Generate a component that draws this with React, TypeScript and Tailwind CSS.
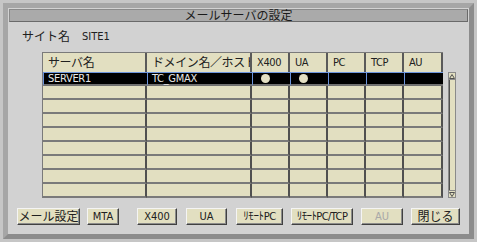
import React from 'react'

const cols = [
  { key: 'server', label: 'サーバ名', w: 'w-[104px]' },
  { key: 'domain', label: 'ドメイン名／ホスト', w: 'w-[105px]' },
  { key: 'x400', label: 'X400', w: 'w-[38px]' },
  { key: 'ua', label: 'UA', w: 'w-[38px]' },
  { key: 'pc', label: 'PC', w: 'w-[38px]' },
  { key: 'tcp', label: 'TCP', w: 'w-[38px]' },
  { key: 'au', label: 'AU', w: 'w-[39px]' },
]

const buttons = [
  { label: 'メール設定', cls: 'w-[63px]' },
  { label: 'MTA', cls: 'w-[32px] ml-[7px] text-[11px]' },
  { label: 'X400', cls: 'w-[40px] ml-[18px] text-[11px]' },
  { label: 'UA', cls: 'w-[41px] ml-[9px] text-[11px]' },
  { label: 'ﾘﾓｰﾄPC', cls: 'w-[47px] ml-[9px] text-[11px] tracking-[-0.4px]' },
  { label: 'ﾘﾓｰﾄPC/TCP', cls: 'w-[62px] ml-[8px] text-[11px] tracking-[-0.6px]' },
  { label: 'AU', cls: 'w-[42px] ml-[8px] text-[11px]', disabled: true },
  { label: '閉じる', cls: 'w-[49px] ml-[8px]' },
]

const font = "font-['DejaVu_Sans_Condensed','Noto_Sans_CJK_JP',sans-serif]"

const Dot = () => <div className="ml-[4px] h-[9px] w-[9px] rounded-full bg-[#e4e0c4]" />

export default function App() {
  const empty = Array.from({ length: 8 })

  return (
    <div className={`h-[242px] w-[477px] bg-[#c6c6c6] p-[3px] text-[12px] leading-[12px] text-[#202020] ${font}`}>
      <div className="flex h-full flex-col border-[5px] border-t-[#a6a6a6] border-l-[#a6a6a6] border-r-[#8c8c8c] border-b-[#8c8c8c] bg-[#d2d2d2]">
        {/* title */}
        <div className="mx-[1px] mt-[1px] flex h-[13px] items-center justify-center border border-t-[#8a8a8a] border-l-[#8a8a8a] border-r-[#6a6a6a] border-b-[#6a6a6a] bg-[#aaaaaa] text-[#1a1a1a]">
          メールサーバの設定
        </div>

        <div className="mt-[9px] flex h-[12px] items-center pl-[14px]">
          <span>サイト名</span>
          <span className="ml-[12px] text-[11px]">SITE1</span>
        </div>

        <div className="ml-[34px] mt-[9px] flex">
          {/* table */}
          <div className="flex flex-col border-l border-t border-[#7a7a7a] bg-[#e2dfc1]">
            <div className="flex h-[19px]">
              {cols.map(c => (
                <div
                  key={c.key}
                  className={`${c.w} flex items-center overflow-hidden whitespace-nowrap border-r-2 border-[#5a5a5a] pl-[5px] tracking-[-0.4px]`}
                >
                  <span className={/[A-Z]/.test(c.label) ? 'text-[11px]' : ''}>{c.label}</span>
                </div>
              ))}
            </div>

            {/* selected row */}
            <div className="flex h-[14px] text-[#e8e8e8]">
              {cols.map(c => (
                <div
                  key={c.key}
                  className={`${c.w} flex items-center whitespace-nowrap border-l border-t border-b-2 border-l-[#6d95dc] border-t-[#6d95dc] border-b-[#707070] bg-black pl-[4px] text-[11px] leading-[11px] tracking-[-0.3px]`}
                >
                  {c.key === 'server' && 'SERVER1'}
                  {c.key === 'domain' && 'TC_GMAX'}
                  {(c.key === 'x400' || c.key === 'ua') && <Dot />}
                </div>
              ))}
            </div>

            {empty.map((_, i) => (
              <div key={i} className="flex h-[14px]">
                {cols.map(c => (
                  <div key={c.key} className={`${c.w} border-r-2 border-b-2 border-r-[#505050] border-b-[#7a7a7a]`} />
                ))}
              </div>
            ))}
          </div>

          {/* scrollbar */}
          <div className="ml-[5px] mt-[20px] flex h-[126px] w-[8px] flex-col border border-[#8a8a8a] bg-[#e2dfc1]">
            <div className="flex h-[7px] items-center justify-center border-b border-[#8a8a8a]">
              <svg width="6" height="5" viewBox="0 0 6 5">
                <path d="M3 0.5 L5.5 4.5 L0.5 4.5 Z" fill="none" stroke="#505050" strokeWidth="1" />
              </svg>
            </div>
            <div className="flex-1 border-l border-[#505050]" />
            <div className="flex h-[7px] items-center justify-center border-t border-[#8a8a8a]">
              <svg width="6" height="5" viewBox="0 0 6 5">
                <path d="M0.5 0.5 L5.5 0.5 L3 4.5 Z" fill="none" stroke="#505050" strokeWidth="1" />
              </svg>
            </div>
          </div>
        </div>

        {/* buttons */}
        <div className="ml-[9px] mt-[10px] flex">
          {buttons.map(b => (
            <div
              key={b.label}
              className={`${b.cls} flex h-[17px] items-center justify-center whitespace-nowrap border border-t-[#f4f4f4] border-l-[#f4f4f4] border-r-[#404040] border-b-[#404040] bg-[#e2dfc1] shadow-[inset_-1px_-1px_0_#8c8c8c] ${b.disabled ? 'text-[#a8a8a8]' : 'text-[#202020]'}`}
            >
              {b.label}
            </div>
          ))}
        </div>
      </div>
    </div>
  )
}
